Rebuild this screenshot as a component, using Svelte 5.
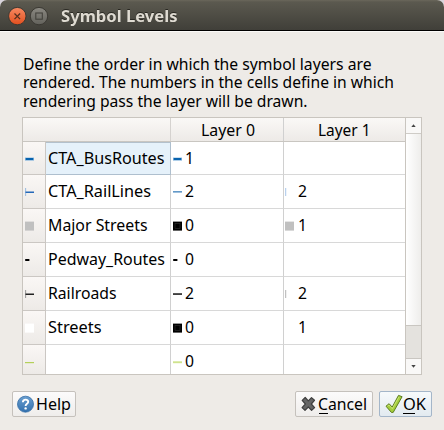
<script>
  const rows = [
    { h: 33, icon: 'blue-thick', name: 'CTA_BusRoutes', w: 116.5, l0: ['blue-thick', '1'], selected: true },
    { h: 34, icon: 'blue-rail', name: 'CTA_RailLines', w: 103, l0: ['blue-thin', '2'], l1: ['blue-tick', '2'] },
    { h: 34, icon: 'gray-box', name: 'Major Streets', w: 99.5, l0: ['black-box', '0'], l1: ['gray-box', '1'] },
    { h: 34, icon: 'dash', name: 'Pedway_Routes', w: 117, l0: ['dash', '0'] },
    { h: 34, icon: 'black-rail', name: 'Railroads', w: 68.5, l0: ['black-thin', '2'], l1: ['gray-tick', '2'] },
    { h: 34, icon: 'white-box', name: 'Streets', w: 53.5, l0: ['black-box', '0'], l1: ['', '1'] },
    { h: 29, icon: 'green', name: '', w: 0, l0: ['green-light', '0'] }
  ];
</script>

{#snippet label(text, w, h, y, size = 15.5)}
  <svg class="label" width={w} height={h}>
    <text x="0" {y} font-size={size} textLength={w} lengthAdjust="spacingAndGlyphs">{text}</text>
  </svg>
{/snippet}

{#snippet symbol(kind)}
  <svg class="symbol" width="10" height="10" viewBox="0 0 10 10">
    {#if kind === 'blue-thick'}
      <rect x="0" y="3.6" width="9" height="3" fill="#7fb2dc" />
      <rect x="0.8" y="4" width="7.4" height="2" fill="#0863ae" />
    {:else if kind === 'blue-thin'}
      <rect x="0" y="4.2" width="9" height="1.3" fill="#3d80bb" />
    {:else if kind === 'blue-rail'}
      <rect x="0.2" y="1" width="0.9" height="8" fill="#8eb3dc" />
      <rect x="0.5" y="4.5" width="8.5" height="1.5" fill="#2468b8" />
    {:else if kind === 'blue-tick'}
      <rect x="0.2" y="1" width="1" height="8" fill="#a9c6ea" />
    {:else if kind === 'gray-tick'}
      <rect x="0.2" y="1" width="1" height="8" fill="#b2b2b2" />
    {:else if kind === 'gray-box'}
      <rect x="0" y="0.6" width="9" height="9" fill="#c0c0c0" />
    {:else if kind === 'white-box'}
      <rect x="0" y="0.6" width="9" height="9" fill="#fff" />
    {:else if kind === 'black-box'}
      <rect x="0" y="0.6" width="9" height="9" fill="#000" />
      <rect x="2" y="2.6" width="5" height="5" fill="none" stroke="#303030" stroke-width="0.6" />
    {:else if kind === 'dash'}
      <rect x="0.2" y="4" width="4.2" height="2" fill="#000" />
    {:else if kind === 'black-thin'}
      <rect x="0" y="4.3" width="9" height="1.5" fill="#111" />
    {:else if kind === 'black-rail'}
      <rect x="0.2" y="1" width="0.9" height="8" fill="#8d8d8d" />
      <rect x="0.5" y="4.5" width="8.5" height="1.5" fill="#222" />
    {:else if kind === 'green'}
      <rect x="0" y="5" width="9" height="1.2" fill="#b4d05a" />
    {:else if kind === 'green-light'}
      <rect x="0" y="4.3" width="9" height="1.9" fill="#cfe38e" />
    {/if}
  </svg>
{/snippet}

<div class="window">
  <header class="titlebar">
    <svg class="controls" width="52" height="30" viewBox="0 0 52 30">
      <defs>
        <linearGradient id="close" x1="0" y1="0" x2="0" y2="1">
          <stop offset="0" stop-color="#f78a62" /><stop offset="1" stop-color="#e24f1e" />
        </linearGradient>
        <linearGradient id="max" x1="0" y1="0" x2="0" y2="1">
          <stop offset="0" stop-color="#8b8982" /><stop offset="1" stop-color="#62615b" />
        </linearGradient>
      </defs>
      <circle cx="17.3" cy="16.1" r="8.7" fill="url(#close)" stroke="#383630" stroke-width="0.9" />
      <path d="M14.5 13.5l5.6 5.6M20.1 13.5l-5.6 5.6" stroke="#55301f" stroke-width="1.3" />
      <circle cx="39" cy="16.1" r="8.7" fill="url(#max)" stroke="#383630" stroke-width="0.9" />
      <rect x="35.8" y="13" width="6.5" height="6.2" fill="none" stroke="#43423c" stroke-width="1.1" />
    </svg>
    <div class="title">{@render label('Symbol Levels', 116.5, 30, 22.4, 15.7)}</div>
  </header>

  <main>
    <div class="message">
      {@render label('Define the order in which the symbol layers are', 348.5, 19, 14.5)}
      {@render label('rendered. The numbers in the cells define in which', 371, 18, 14)}
      {@render label('rendering pass the layer will be drawn.', 284.5, 19, 15)}
    </div>

    <div class="table">
      <div class="grid">
        <div class="row head">
          <div class="corner"></div>
          <div class="cell c1">{@render label('Layer 0', 54, 24, 17.6)}</div>
          <div class="cell c2">{@render label('Layer 1', 52.5, 24, 17.6)}</div>
        </div>
        {#each rows as r}
          <div class="row" style:height="{r.h}px">
            <div class="cell side">{@render symbol(r.icon)}</div>
            <div class="cell name" class:selected={r.selected}>
              {#if r.name}{@render label(r.name, r.w, 33, r.selected ? 21.9 : 22.4)}{/if}
            </div>
            <div class="cell c1">{@render symbol(r.l0[0])}{@render label(r.l0[1], 9, 29, r.selected ? 21.9 : 22.4)}</div>
            <div class="cell c2">
              {#if r.l1}{@render symbol(r.l1[0])}{@render label(r.l1[1], 9, 29, 22.4)}{/if}
            </div>
          </div>
        {/each}
      </div>
      <div class="scrollbar">
        <div class="arrow up"><svg width="5" height="3"><path d="M0.3 3L2.5 0.2L4.7 3z" fill="#444" /></svg></div>
        <div class="thumb"></div>
        <div class="trough"></div>
        <div class="arrow down"><svg width="5" height="3"><path d="M0.3 0L2.5 2.8L4.7 0z" fill="#444" /></svg></div>
      </div>
    </div>

    <footer>
      <button class="help">
        <svg width="17" height="18" viewBox="0 0 17 18">
          <defs>
            <linearGradient id="q" x1="0" y1="0" x2="0" y2="1">
              <stop offset="0" stop-color="#6b9fd0" /><stop offset="1" stop-color="#3270ae" />
            </linearGradient>
          </defs>
          <circle cx="8.5" cy="9.2" r="8" fill="url(#q)" stroke="#356ea7" stroke-width="0.8" />
          <path d="M5.9 7.2C5.9 3.8 11.4 3.9 11.2 7C11.1 8.9 8.6 8.9 8.6 11" fill="none" stroke="#fff" stroke-width="1.9" />
          <circle cx="8.6" cy="13.4" r="1.2" fill="#fff" />
        </svg>
        {@render label('Help', 35, 24, 17.6)}
      </button>
      <span class="spacer"></span>
      <button class="cancel">
        <svg width="15" height="16" viewBox="0 0 15 16">
          <path d="M4.2 1.5L7.3 4.9L10.5 1.6L13.5 4.3L10.3 8L13.6 11.6L10.6 14.4L7.3 11L4 14.4L1.1 11.6L4.4 8L1.2 4.4z" fill="#666" stroke="#3f3f3f" stroke-width="1.2" stroke-linejoin="round" />
        </svg>
        {@render label('Cancel', 49, 24, 17.6)}
        <i class="mnemonic"></i>
      </button>
      <button class="ok">
        <svg width="18" height="20" viewBox="0 0 18 20">
          <path d="M1 12.2L4.1 9.7L7.2 13.1L13.5 1.4L17.1 2.7L8.2 18.4L6.4 18.4z" fill="#a5cf3e" stroke="#5c7d22" stroke-width="1" stroke-linejoin="round" />
          <path d="M2.6 12.1L4 11L7.3 14.7L14 2.8" fill="none" stroke="#d2ea83" stroke-width="0.8" />
        </svg>
        {@render label('OK', 23, 24, 17.6)}
        <i class="mnemonic"></i>
      </button>
    </footer>
  </main>
</div>

<style>
  :global(body) { margin: 0; background: #d9d4dc; }
  * { box-sizing: border-box; }
  svg { display: block; flex: none; }
  .window { width: 444px; height: 430px; overflow: hidden; border-radius: 7px 7px 0 0; background: #eeebe7; font-family: "Noto Sans", "Open Sans", sans-serif; }
  .label { overflow: visible; fill: #000; }
  .titlebar { height: 32px; display: flex; background: linear-gradient(#6a675b 0, #5b594f 2px, #403f39 30px); border-bottom: 1px solid #fbfaf8; box-shadow: inset 0 -1px #000; }
  .title { padding-left: 9px; font-weight: 700; filter: drop-shadow(0 -1px 0 #292822); }
  .title .label { fill: #dfdbd2; }
  main { padding: 23px 22px 0; }
  .message { height: 62px; padding-left: 0.5px; }
  .table { width: 400px; height: 258px; display: flex; border: 1px solid #c9c5bf; background: #fff; }
  .grid { width: 382px; overflow: hidden; }
  .row { display: flex; }
  .head { height: 24px; background: linear-gradient(#faf8f6, #edeae7); border-bottom: 1px solid #c9c6c1; }
  .cell { height: 100%; display: flex; align-items: flex-start; border-right: 1px solid #d0d0d0; border-bottom: 1px solid #d8d8d8; }
  .head .cell { border-bottom: 0; justify-content: center; padding: 0; }
  .head .c1 { padding-left: 1px; }
  .corner { width: 148px; border-right: 1px solid #d5d2cf; }
  .side { width: 23px; padding-left: 2px; background: linear-gradient(#faf7f5, #edeae7); border-color: #cbc7c3; }
  .name { width: 125px; padding-left: 1.5px; }
  .selected { background: #e5f1fa; border-color: #aebfce; box-shadow: inset 0 1px #b2c0cc; }
  .c1 { width: 113px; padding-left: 1.6px; }
  .c2 { width: 121px; padding-left: 1.2px; border-right: 0; }
  .symbol { margin-top: 12px; margin-right: 2.9px; }
  .row:last-child .cell { border-bottom: 0; }
  .scrollbar { width: 16px; display: flex; flex-direction: column; border-left: 1px solid #c9c5bf; }
  .arrow { height: 16px; display: flex; align-items: center; justify-content: center; background: #f9f8f7; }
  .up { border-bottom: 1px solid #cfccc7; }
  .down { border-top: 1px solid #c9c6c1; }
  .thumb { height: 192px; background: linear-gradient(90deg, #fff, #eeedeb); border-bottom: 1px solid #c9c6c1; }
  .trough { flex: 1; background: #e4e2de; }
  footer { display: flex; height: 26px; margin: 16px -10px 0; }
  .spacer { flex: 1; }
  button { position: relative; display: flex; align-items: center; height: 26px; padding: 0; border: 1px solid #c5c1bc; border-radius: 2px; background: linear-gradient(#fcfbfb, #efedeb); font: inherit; }
  .help { width: 64px; padding-left: 4px; gap: 1.5px; }
  .cancel { width: 78px; padding-left: 5px; gap: 2px; margin-right: 6px; }
  .ok { width: 53px; padding-left: 5px; gap: 0; border-color: #a4b6c9; background: linear-gradient(#f7fafc, #e2eaf0); }
  .mnemonic { position: absolute; top: 21px; height: 1px; background: #000; }
  .cancel .mnemonic { left: 23px; width: 9px; }
  .ok .mnemonic { left: 23px; width: 12px; }
</style>
